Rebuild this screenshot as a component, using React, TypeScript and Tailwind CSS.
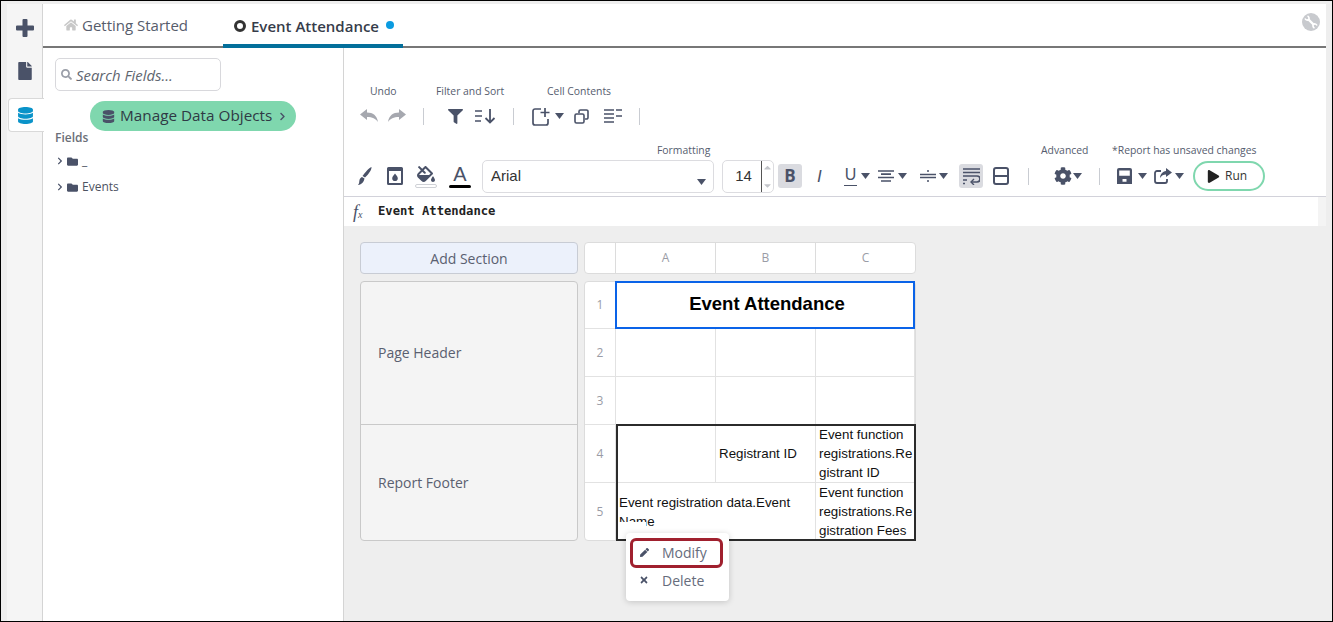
import React from "react";
import { FaFile, FaDatabase, FaHome, FaSearch, FaFolder, FaChevronRight, FaFilter, FaFillDrip, FaCog, FaPlay, FaPen, FaTimes, FaCaretDown, FaCaretUp } from "react-icons/fa";

const ic = "#4a5268";
const Caret = ({ className = "" }: { className?: string }) => (
  <svg width="9" height="6" viewBox="0 0 9 6" className={className}><path d="M0 0h9L4.5 6z" fill={ic} /></svg>
);
const Sep = ({ className = "" }: { className?: string }) => <div className={"w-px h-[17px] bg-[#c9ccd2] shrink-0 " + className} />;
const Label = ({ children, className = "" }: { children: React.ReactNode; className?: string }) => (
  <div className={"text-[10.4px] leading-[14px] text-[#555c6e] whitespace-nowrap " + className}>{children}</div>
);

function PlusIcon() {
  return (
    <svg width="18" height="18" viewBox="0 0 18 18"><path fill={ic} d="M6.500 1a1 1 0 0 1 1-1h3a1 1 0 0 1 1 1v5.500H17a1 1 0 0 1 1 1v3a1 1 0 0 1-1 1h-5.500V17a1 1 0 0 1-1 1h-3a1 1 0 0 1-1-1v-5.500H1a1 1 0 0 1-1-1v-3a1 1 0 0 1 1-1h5.500z" /></svg>
  );
}
function Wrench() {
  return (
    <svg width="14" height="14" viewBox="0 0 14 14" fill="none" stroke="#fff">
      <path d="M4 4l6 6" strokeWidth="2.400" />
      <path d="M1 3.500A2.600 2.600 0 0 0 5 4.500M3.500 1A2.600 2.600 0 0 1 4.500 5M13 10.500A2.600 2.600 0 0 0 9 9.500M10.500 13A2.600 2.600 0 0 1 9.500 9" strokeWidth="1.600" />
    </svg>
  );
}
function UndoArrow({ flip = false }: { flip?: boolean }) {
  return (
    <svg width="18" height="14" viewBox="0 0 18 14" style={flip ? { transform: "scaleX(-1)" } : undefined}>
      <path fill="#a6a8af" d="M0 5.500L7 0v3.500c6 0 10 3 11 9.500-2.500-3.500-5.500-5-11-5V11z" />
    </svg>
  );
}
function SortIcon() {
  return (
    <svg width="22" height="16" viewBox="0 0 22 16" fill="none" stroke={ic}>
      <path d="M0 3h7M0 8h7M0 13h6" strokeWidth="1.600" />
      <path d="M15 1v13M10.500 10l4.500 4.500 4.500-4.500" strokeWidth="1.800" />
    </svg>
  );
}
function AddCell() {
  return (
    <svg width="19" height="19" viewBox="0 0 19 19" fill="none" stroke={ic} strokeWidth="1.700">
      <path d="M9 2H3a2 2 0 0 0-2 2v12a2 2 0 0 0 2 2h11a2 2 0 0 0 2-2v-4" />
      <path d="M13 1v9M8.500 5.500h9" />
    </svg>
  );
}
function CopyIcon() {
  return (
    <svg width="15" height="15" viewBox="0 0 15 15" fill="none" stroke={ic} strokeWidth="1.600">
      <path d="M5 4V2.500A1.500 1.500 0 0 1 6.500 1h6A1.500 1.500 0 0 1 14 2.500v6a1.500 1.500 0 0 1-1.500 1.500H11" />
      <rect x="1" y="5" width="9" height="9" rx="1.500" />
    </svg>
  );
}
function ListIcon() {
  return (
    <svg width="18" height="14" viewBox="0 0 18 14" stroke={ic} strokeWidth="1.600">
      <path d="M0 1h10M12 1h6M0 5h10M0 9h10M12 7h6M0 13h10" />
    </svg>
  );
}
function Brush() {
  return (
    <svg width="14" height="18" viewBox="0 0 14 18">
      <path fill={ic} d="M13.500 0c.4 2.500-3 7.500-6.500 10.500L4.500 9C7 5.500 11 1 13.500 0zM4 10l2.500 1.500C6 14.500 4 17.500 0 18c1.500-1.500 1-3 1.500-5 .3-1.300 1.300-2.500 2.500-3z" />
    </svg>
  );
}
function Droplet() {
  return (
    <svg width="16" height="18" viewBox="0 0 16 18">
      <path fillRule="evenodd" fill={ic} d="M1.500 0h13A1.500 1.500 0 0 1 16 1.500v15a1.500 1.500 0 0 1-1.500 1.500h-13A1.500 1.500 0 0 1 0 16.500v-15A1.500 1.500 0 0 1 1.500 0zM2 4v12h12V4z" />
      <path fill={ic} d="M8 6.500c1.500 2 2.800 3.300 2.800 4.800a2.800 2.800 0 0 1-5.600 0C5.200 9.800 6.500 8.500 8 6.500z" />
    </svg>
  );
}
function AlignIcon() {
  return (
    <svg width="16" height="12" viewBox="0 0 16 12" stroke={ic} strokeWidth="1.700"><path d="M0 1h16M3 4.200h10M0 7.500h16M3 11h10" /></svg>
  );
}
function SpacingIcon() {
  return (
    <svg width="16" height="12" viewBox="0 0 16 12" stroke={ic}><path d="M0 4.500h16M0 7.500h16" strokeWidth="1.500" /><path d="M8 0v2M8 10v2" strokeWidth="1.500" /></svg>
  );
}
function WrapIcon() {
  return (
    <svg width="17" height="17" viewBox="0 0 17 17" fill="none" stroke={ic} strokeWidth="1.700">
      <path d="M0 1h17M0 4.500h17M0 8h14a2.500 2.500 0 0 1 0 6H8" />
      <path d="M11 11l-3 3 3 3" strokeWidth="1.400" />
      <path d="M0 12h4M0 15.500h2" />
    </svg>
  );
}
function SplitIcon() {
  return (
    <svg width="18" height="18" viewBox="0 0 18 18" fill="none" stroke={ic} strokeWidth="2"><rect x="2" y="1" width="14" height="16" rx="2" /><path d="M2 9h14" /></svg>
  );
}
function SaveIcon() {
  return (
    <svg width="15" height="16" viewBox="0 0 15 16"><path fillRule="evenodd" fill={ic} d="M2 0h11a2 2 0 0 1 2 2v14H0V2a2 2 0 0 1 2-2zM2.200 2.400v5.400h10.600V2.400zM5.500 11v2.800h4V11z" /></svg>
  );
}
function ExportIcon() {
  return (
    <svg width="18" height="16" viewBox="0 0 18 16">
      <path d="M7 3H3a2 2 0 0 0-2 2v8a2 2 0 0 0 2 2h8a2 2 0 0 0 2-2v-2" fill="none" stroke={ic} strokeWidth="1.800" />
      <path d="M12 0l6 4.500-6 4.500V6.500C9.500 6.500 7.500 7.500 6 10c.3-4 2.500-6.500 6-7z" fill={ic} />
    </svg>
  );
}

const cellCls = "border-r border-b border-[#e2e2e2] min-w-0";
const tc = "font-['Liberation_Sans',Arial,sans-serif] text-[13.33px] leading-[19px] text-[#111]";

export default function App() {
  return (
    <div className="w-[1333px] h-[622px] overflow-hidden border border-black bg-[#eeeeee] font-['Open_Sans',sans-serif] pt-[3px] pl-[6px] pr-[6px] flex">
      {/* Rail */}
      <div className="w-[36px] shrink-0 bg-[#f5f5f5] border-r border-[#d4d4d4] flex flex-col relative">
        <div className="h-[44px] flex items-center justify-center pl-[1px] pt-[3px]"><PlusIcon /></div>
        <div className="h-[44px] flex items-center justify-center pt-[2px]"><FaFile size={18} color={ic} /></div>
        <div className="h-[34px] w-[36px] mt-[6px] ml-[1px] bg-white border border-r-0 border-[#d9d9d9] rounded-l-[4px] flex items-center justify-center z-10 pr-[3px]">
          <FaDatabase size={17} color="#0a93c9" />
        </div>
      </div>

      {/* Main */}
      <div className="flex-1 min-w-0 flex flex-col">
        {/* Tabs */}
        <div className="h-[44px] bg-white border-b-2 border-[#777] flex items-stretch relative shrink-0">
          <div className="w-[180px] flex items-center pl-[21px] gap-[4px] text-[15px] text-[#565c6b]">
            <FaHome size={14} color="#c8c8c8" />
            <span>Getting Started</span>
          </div>
          <div className="w-[180px] border-b-4 border-[#036f9b] flex items-center pl-[11px] gap-[5px] text-[15px] font-semibold text-[#363c4a] pt-[4px] h-[44px]">
            <span className="w-[12px] h-[12px] rounded-full border-[3px] border-[#333] inline-block" />
            <span>Event Attendance</span>
            <span className="w-[8px] h-[8px] rounded-full bg-[#0a9be0] ml-[2px] mb-[2px]" />
          </div>
          <div className="ml-auto mr-[6px] mt-[9px] w-[18px] h-[18px] rounded-full bg-[#c8cace] flex items-center justify-center">
            <Wrench />
          </div>
        </div>

        <div className="flex-1 flex min-h-0">
          {/* Fields panel */}
          <div className="w-[301px] shrink-0 bg-white border-r border-[#d4d4d4] pt-[10px] pl-[12px] flex flex-col">
            <div className="w-[166px] h-[33px] border border-[#d8d8dc] rounded-[5px] flex items-center pl-[5px] gap-[4px]">
              <FaSearch size={11} color="#9a9ea8" />
              <span className="italic text-[14.900px] text-[#60656f] pt-[1px]">Search Fields...</span>
            </div>
            <div className="w-[206px] h-[30px] mt-[10px] ml-[35px] rounded-full bg-[#7fd7ae] flex items-center pl-[12px] gap-[5px]">
              <FaDatabase size={13} color={ic} />
              <span className="text-[15.300px] text-[#2f3a45] whitespace-nowrap pb-[2px]">Manage Data Objects</span>
              <FaChevronRight size={9} color={ic} className="ml-[1px]" />
            </div>
            <div className="text-[12px] font-semibold text-[#6b6f78] mt-[-1px] leading-[16px]">Fields</div>
            <div className="flex items-center gap-[3px] h-[26px] mt-[2px] pl-[1px] text-[12px] text-[#4d5361]">
              <FaChevronRight size={8} color={ic} />
              <FaFolder size={11} color={ic} />
              <span className="ml-[1px]">_</span>
            </div>
            <div className="flex items-center gap-[3px] h-[26px] pl-[1px] text-[12px] text-[#4d5361]">
              <FaChevronRight size={8} color={ic} />
              <FaFolder size={11} color={ic} />
              <span className="ml-[1px]">Events</span>
            </div>
          </div>

          {/* Right */}
          <div className="flex-1 min-w-0 flex flex-col">
            {/* Toolbar */}
            <div className="h-[149px] bg-white border-b border-[#d2d2da] shrink-0 flex flex-col">
              <div className="h-[36px] shrink-0" />
              <div className="flex h-[14px] shrink-0">
                <Label className="ml-[26px] w-[66px]">Undo</Label>
                <Label className="w-[111px]">Filter and Sort</Label>
                <Label>Cell Contents</Label>
              </div>
              <div className="flex items-center h-[20px] mt-[8px] shrink-0">
                <span className="ml-[16px] flex"><UndoArrow /></span>
                <span className="ml-[10px] flex"><UndoArrow flip /></span>
                <Sep className="ml-[17px]" />
                <FaFilter size={15} color={ic} className="ml-[24px]" />
                <span className="ml-[12px] flex"><SortIcon /></span>
                <Sep className="ml-[16px]" />
                <span className="ml-[18px] flex"><AddCell /></span>
                <Caret className="ml-[4px]" />
                <span className="ml-[10px] flex"><CopyIcon /></span>
                <span className="ml-[15px] flex"><ListIcon /></span>
                <Sep className="ml-[17px]" />
              </div>
              <div className="flex h-[14px] mt-[17px] shrink-0">
                <Label className="ml-[313px] w-[384px]">Formatting</Label>
                <Label className="w-[71px]">Advanced</Label>
                <Label>*Report has unsaved changes</Label>
              </div>
              <div className="flex items-center h-[34px] mt-[2px] shrink-0">
                <span className="ml-[14px] flex"><Brush /></span>
                <span className="ml-[15px] flex"><Droplet /></span>
                <span className="ml-[12px] flex flex-col items-center">
                  <FaFillDrip size={18} color={ic} />
                  <span className="w-[22px] h-[4px] rounded-full border border-[#cfd1d6] mt-[1px]" />
                </span>
                <span className="ml-[12px] flex flex-col items-center text-[20px] leading-[20px] text-[#4a5268] font-['Liberation_Sans',sans-serif]">
                  A
                  <span className="w-[22px] h-[3px] rounded-full bg-black mt-[1px]" />
                </span>
                <div className="ml-[11px] w-[232px] h-[33px] border border-[#dcdce0] rounded-[5px] flex items-center pl-[8px] relative text-[15px] text-[#333] font-['Liberation_Sans',sans-serif]">
                  Arial
                  <Caret className="absolute right-[7px] bottom-[7px]" />
                </div>
                <div className="ml-[8px] w-[52px] h-[33px] border border-[#dcdce0] rounded-[5px] flex font-['Liberation_Sans',sans-serif] text-[15px] text-[#333]">
                  <span className="flex-1 flex items-center justify-center pl-[3px]">14</span>
                  <span className="w-[12px] border-l border-[#555] flex flex-col items-center justify-between py-[1px]">
                    <FaCaretUp size={11} color="#c3c5ca" />
                    <FaCaretDown size={11} color="#c3c5ca" />
                  </span>
                </div>
                <div className="ml-[4px] w-[24px] h-[24px] rounded-[3px] bg-[#dadbe0] flex items-center justify-center text-[17px] font-bold text-[#4a5268]">B</div>
                <span className="ml-[15px] w-[8px] text-[17px] italic text-[#4a5268] font-['Liberation_Sans',sans-serif] leading-none">I</span>
                <span className="ml-[19px] text-center text-[16px] leading-[16px] text-[#4a5268] border-b-[1.500px] border-[#4a5268] w-[13px] h-[19px] font-['Liberation_Sans',sans-serif]">U</span>
                <Caret className="ml-[4px]" />
                <span className="ml-[8px] flex"><AlignIcon /></span>
                <Caret className="ml-[4px]" />
                <span className="ml-[13px] flex"><SpacingIcon /></span>
                <Caret className="ml-[3px]" />
                <div className="ml-[11px] w-[24px] h-[24px] rounded-[3px] bg-[#dadbe0] flex items-center justify-center"><WrapIcon /></div>
                <span className="ml-[9px] flex"><SplitIcon /></span>
                <Sep className="ml-[18px]" />
                <FaCog size={18} color={ic} className="ml-[25px]" />
                <Caret className="ml-[1px]" />
                <Sep className="ml-[17px]" />
                <span className="ml-[17px] flex"><SaveIcon /></span>
                <Caret className="ml-[6px]" />
                <span className="ml-[7px] flex"><ExportIcon /></span>
                <Caret className="ml-[3px]" />
                <div className="ml-[9px] w-[72px] h-[30px] rounded-full border-2 border-[#7fd7ae] flex items-center pl-[12px] gap-[5px] text-[12px] text-[#333]">
                  <FaPlay size={13} color="#222" />
                  Run
                </div>
              </div>
            </div>

            {/* Formula bar */}
            <div className="h-[29px] shrink-0 bg-[#f4f4f4]">
              <div className="h-[29px] bg-white flex items-center mr-[8px]">
                <span className="ml-[9px] w-[14px] font-['Liberation_Serif',serif] italic text-[18px] text-[#4a5268] leading-none">f<span className="text-[10px]">x</span></span>
                <span className="ml-[11px] font-['DejaVu_Sans_Mono',monospace] font-semibold text-[12.200px] text-[#222]">Event Attendance</span>
              </div>
            </div>

            {/* Canvas */}
            <div className="flex-1 bg-[#eeeeee] pl-[16px] pt-[16px] flex gap-[6px]">
              <div className="w-[218px] flex flex-col gap-[7px] shrink-0">
                <div className="h-[32px] rounded-[4px] border border-[#c8ccd4] bg-[#ecf1fb] flex items-center justify-center text-[14px] text-[#5a6070]">Add Section</div>
                <div className="h-[260px] rounded-[4px] border border-[#c9c9c9] bg-[#f4f4f4] flex flex-col text-[14px] text-[#5a6070]">
                  <div className="h-[143px] border-b border-[#c9c9c9] flex items-center pl-[17px] pb-[2px]">Page Header</div>
                  <div className="flex-1 flex items-center pl-[17px]">Report Footer</div>
                </div>
              </div>
              <div className="w-[332px] flex flex-col gap-[7px] shrink-0">
                <div className="h-[32px] rounded-[4px] border border-[#dcdcdc] bg-white grid grid-cols-[31px_100px_100px_99px] text-[12px] text-[#9a9ca6] text-center">
                  <div className="border-r border-[#dcdcdc]" />
                  <div className="border-r border-[#dcdcdc] leading-[30px]">A</div>
                  <div className="border-r border-[#dcdcdc] leading-[30px]">B</div>
                  <div className="leading-[30px]">C</div>
                </div>
                <div className="h-[260px] rounded-[4px] border border-[#dcdcdc] bg-white relative grid grid-cols-[31px_100px_100px_99px] grid-rows-[47px_48px_48px_58px_57px] text-[12px] text-[#9a9ca6]">
                  <div className={cellCls + " flex items-center justify-center pb-[1px]"}>1</div>
                  <div className="col-span-3 h-[48px] -mt-[1px] -ml-[1px] border-2 border-[#0a63e8] flex items-center justify-center pl-[4px] pb-[2px] font-['Liberation_Sans',sans-serif] font-bold text-[18.500px] text-black">Event Attendance</div>
                  <div className={cellCls + " flex items-center justify-center"}>2</div>
                  <div className={cellCls} />
                  <div className={cellCls} />
                  <div className={cellCls} />
                  <div className={cellCls + " flex items-center justify-center"}>3</div>
                  <div className={cellCls} />
                  <div className={cellCls} />
                  <div className={cellCls} />
                  <div className={cellCls + " flex items-center justify-center"}>4</div>
                  <div className={cellCls} />
                  <div className={cellCls + " flex items-center pl-[3px] " + tc}>Registrant ID</div>
                  <div className={cellCls + " flex items-center pl-[3px] whitespace-nowrap " + tc}><span>Event function<br />registrations.Re<br />gistrant ID</span></div>
                  <div className="border-r border-[#e2e2e2] flex items-center justify-center">5</div>
                  <div className={"col-span-2 border-r border-[#e2e2e2] flex items-center pl-[3px] " + tc}><span>Event registration data.Event Name</span></div>
                  <div className={"flex items-center pl-[3px] whitespace-nowrap " + tc}><span>Event function<br />registrations.Re<br />gistration Fees</span></div>

                  {/* selection outline */}
                  <div className="absolute left-[31px] top-[142px] w-[300px] h-[117px] border-2 border-[#2b2b2b] pointer-events-none" />
                  {/* menu stub */}
                  <div className="absolute left-[34px] top-[240px] w-[27px] h-[16px] bg-white" />
                  {/* context menu */}
                  <div className="absolute left-[41px] top-[251px] w-[103px] h-[68px] bg-white rounded-[4px] shadow-[0_1px_6px_rgba(0,0,0,0.18)] pt-[5px] px-[4px] text-[14px] text-[#666c7c] z-10">
                    <div className="h-[30px] w-[93px] border-[3px] border-[#a0202e] rounded-[6px] flex items-center pl-[7px] gap-[13px] pb-[1px]">
                      <FaPen size={9} color={ic} />
                      Modify
                    </div>
                    <div className="h-[26px] -mt-[1px] flex items-center pl-[9px] gap-[13px]">
                      <FaTimes size={10} color={ic} />
                      Delete
                    </div>
                  </div>
                </div>
              </div>
            </div>
          </div>
        </div>
      </div>
    </div>
  );
}
